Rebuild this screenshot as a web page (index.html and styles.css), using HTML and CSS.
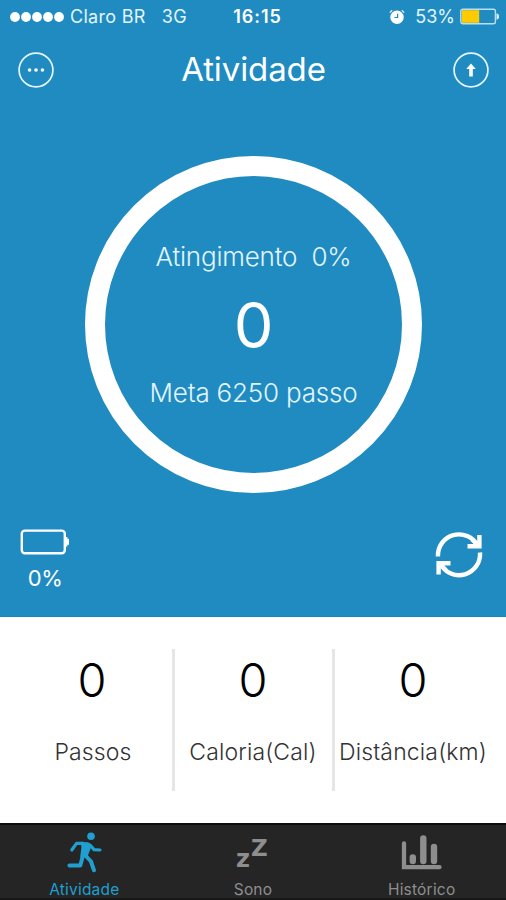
FILE: index.html
```html
<!DOCTYPE html>
<html lang="pt-BR">
<head>
    <meta charset="UTF-8">
    <meta name="viewport" content="width=device-width, initial-scale=1.0">
    <title>Atividade</title>
    <link rel="stylesheet" href="styles.css">
</head>
<body>

    <div class="hero">
        <div class="status-bar">
            <div class="carrier">
                <svg class="signal" width="54" height="12" viewBox="0 0 54 12" fill="#fff">
                    <circle cx="5" cy="6" r="4.9"/>
                    <circle cx="16" cy="6" r="4.9"/>
                    <circle cx="27" cy="6" r="4.9"/>
                    <circle cx="38" cy="6" r="4.9"/>
                    <circle cx="49" cy="6" r="4.9"/>
                </svg>
                <span class="carrier-name">Claro BR</span>
                <span class="network">3G</span>
            </div>
            <span class="clock">16:15</span>
            <div class="power">
                <svg width="16" height="16" viewBox="0 0 16 16">
                    <circle cx="8" cy="8.2" r="6.7" fill="#fff"/>
                    <path d="M.8 3.6 3.2 1.3M15.2 3.6 12.8 1.3" stroke="#e2f5ff" stroke-width="1.2"/>
                    <path d="M8.6 4.7V8.5H5.4" fill="none" stroke="#208bc1" stroke-width="1.2"/>
                </svg>
                <span class="percent">53%</span>
                <svg width="39" height="17" viewBox="0 0 39 17">
                    <rect x=".8" y="1.2" width="34.6" height="14.6" rx="2" fill="none" stroke="#b9dff2" stroke-width="1.4"/>
                    <rect x="1.8" y="2.2" width="17.4" height="12.6" fill="#fecb02"/>
                    <path d="M36.5 5.2a3.4 3.4 0 0 1 0 6.6z" fill="#d9f0fb"/>
                </svg>
            </div>
        </div>

        <div class="nav-bar">
            <svg width="36" height="36" viewBox="0 0 36 36">
                <circle cx="18" cy="18" r="16.9" fill="none" stroke="#e2f5ff" stroke-width="1.7"/>
                <g fill="#fff">
                    <circle cx="11.6" cy="18" r="1.8"/>
                    <circle cx="18" cy="18" r="1.8"/>
                    <circle cx="24.4" cy="18" r="1.8"/>
                </g>
            </svg>
            <h1>Atividade</h1>
            <svg width="36" height="36" viewBox="0 0 36 36">
                <circle cx="18" cy="18" r="16.9" fill="none" stroke="#e2f5ff" stroke-width="1.7"/>
                <path d="M18 11.5 22.8 17H19.8V24.5H16.2V17H13.2Z" fill="#fff"/>
            </svg>
        </div>

        <div class="ring">
            <p class="progress">Atingimento&nbsp; 0%</p>
            <p class="steps">0</p>
            <p class="goal">Meta 6250 passo</p>
        </div>

        <div class="device">
            <div class="band-battery">
                <svg width="50" height="26" viewBox="0 0 50 26">
                    <rect x="1.8" y="1.6" width="43" height="22.6" rx="3" fill="none" stroke="#fff" stroke-width="2.4"/>
                    <path d="M45.8 8h1.6v1.7h1.6v6h-1.6v1.7h-1.6z" fill="#fff"/>
                </svg>
                <span>0%</span>
            </div>
            <svg class="sync" width="48" height="48" viewBox="0 0 48 48" fill="none" stroke="#fff" stroke-width="4.4">
                <path d="M3 25.5A21 21 0 0 1 42.5 14.5"/>
                <path d="M44.4 4V15.2H32.5M43.5 14.5 37 8.5"/>
                <path d="M45 21.5A21 21 0 0 1 5.5 33"/>
                <path d="M3.6 43.5V32.2H15.5M4.5 33 11 39"/>
            </svg>
        </div>
    </div>

    <div class="stats">
        <div class="stat">
            <span class="value">0</span>
            <span class="label">Passos</span>
        </div>
        <div class="stat">
            <span class="value">0</span>
            <span class="label">Caloria(Cal)</span>
        </div>
        <div class="stat">
            <span class="value">0</span>
            <span class="label">Distância(km)</span>
        </div>
    </div>

    <div class="tab-bar">
        <div class="tab active">
            <svg width="36" height="42" viewBox="0 0 36 42" fill="none" stroke="#219fd0" stroke-linecap="round" stroke-linejoin="round">
                <circle cx="25" cy="4.3" r="3.8" fill="#219fd0" stroke="none"/>
                <path d="M5.8 18 10.5 11.4 17 11.4" stroke-width="3.2"/>
                <path d="M21 12 24.5 13.5 28 17.6 34 18" stroke-width="3.2"/>
                <path d="M16 11 22.8 12 23.8 15 20.5 23.5 15.6 24 16.8 15Z" fill="#219fd0" stroke-width="2.6"/>
                <path d="M16.8 24 14.3 33.4H3.4M19 23 25 29.5 28 38.3" stroke-width="4"/>
            </svg>
            <span>Atividade</span>
        </div>
        <div class="tab">
            <svg class="zz" width="36" height="42" viewBox="0 0 36 42">
                <text x="1" y="35" font-size="24">z</text>
                <text x="16" y="24" font-size="23">Z</text>
            </svg>
            <span>Sono</span>
        </div>
        <div class="tab">
            <svg width="42" height="42" viewBox="0 0 42 42" fill="none" stroke="#8e8e8e" stroke-linecap="round">
                <path d="M3 11.5V35.2H38.5" stroke-width="4.3"/>
                <path d="M11.8 25.5V29M22.3 6.5V29M33 15V29" stroke-width="6.4"/>
            </svg>
            <span>Histórico</span>
        </div>
    </div>

</body>
</html>
```

FILE: styles.css
```css
* {
    box-sizing: border-box;
}

body {
    margin: 0;
    height: 900px;
    display: flex;
    flex-direction: column;
    font-family: Inter, "Liberation Sans", sans-serif;
    background-color: white;
    overflow: hidden;
}

h1, p {
    margin: 0;
}

svg {
    display: block;
    flex-shrink: 0;
}

.hero {
    height: 617px;
    background-color: #208bc1;
    color: white;
    display: flex;
    flex-direction: column;
    align-items: center;
    border-bottom: 1px solid #1689b4;
}

.status-bar {
    width: 100%;
    height: 34px;
    padding: 0 7px 1px 10px;
    display: grid;
    grid-template-columns: 1fr auto 1fr;
    align-items: center;
    font-size: 18px;
    color: #e2f5ff;
}

.carrier, .power {
    display: flex;
    align-items: center;
}

.carrier-name {
    margin-left: 6px;
    letter-spacing: 0.3px;
}

.network {
    margin-left: 16px;
    letter-spacing: 0.3px;
}

.clock {
    margin-left: 6px;
    font-weight: 600;
    letter-spacing: 0.9px;
    color: white;
}

.power {
    justify-content: flex-end;
}

.percent {
    margin: 0 5px 0 10px;
}

.nav-bar {
    width: 100%;
    height: 72px;
    padding: 0 17px 1px 18px;
    display: flex;
    justify-content: space-between;
    align-items: center;
}

.nav-bar h1 {
    padding-bottom: 2px;
    font-size: 33px;
    font-weight: 400;
    letter-spacing: -0.1px;
}

.ring {
    width: 337px;
    height: 337px;
    margin: 50px 0 0 1px;
    padding-top: 65px;
    border: 20px solid white;
    border-radius: 50%;
    text-align: center;
    white-space: nowrap;
}

.progress, .goal {
    font-size: 26px;
    font-weight: 350;
    line-height: 32px;
    letter-spacing: -0.2px;
    color: #e2f5ff;
}

.steps {
    margin: 16px 0;
    font-size: 63px;
    font-weight: 400;
    line-height: 72px;
}

.device {
    width: 100%;
    padding: 36px 23px 0 20px;
    display: flex;
    justify-content: space-between;
}

.band-battery {
    display: flex;
    flex-direction: column;
    align-items: center;
    gap: 9px;
    font-size: 22px;
    line-height: 28px;
    letter-spacing: -0.5px;
}

.sync {
    margin-top: 2px;
}

.stats {
    height: 206px;
    padding: 32px 14px 0 12px;
    display: grid;
    grid-template-columns: 160px 160px 160px;
}

.stat {
    height: 142px;
    display: flex;
    flex-direction: column;
    align-items: center;
    white-space: nowrap;
}

.stat + .stat {
    border-left: 3px solid #e6e6e6;
    padding-right: 1px;
}

.value {
    margin-top: 3px;
    font-size: 47px;
    font-weight: 350;
    line-height: 56px;
    color: black;
}

.label {
    margin-top: 29px;
    font-size: 23px;
    font-weight: 300;
    line-height: 30px;
    letter-spacing: 0.15px;
    color: #333;
}

.stat:first-child .label {
    padding-left: 2px;
}

.tab-bar {
    height: 77px;
    display: grid;
    grid-template-columns: repeat(3, 1fr);
    background-color: #252525;
    border-top: 2px solid #0c0c0c;
    border-bottom: 2px solid #171717;
}

.tab {
    padding-top: 7px;
    display: flex;
    flex-direction: column;
    align-items: center;
    font-size: 15.5px;
    line-height: 20px;
    letter-spacing: 0.2px;
    color: #8e8e8e;
}

.tab span {
    margin-top: 6px;
}

.zz {
    overflow: visible;
    font-family: "DejaVu Sans", sans-serif;
    font-weight: 700;
    letter-spacing: 0;
    fill: #8e8e8e;
}

.active {
    color: #219fd0;
}
```
